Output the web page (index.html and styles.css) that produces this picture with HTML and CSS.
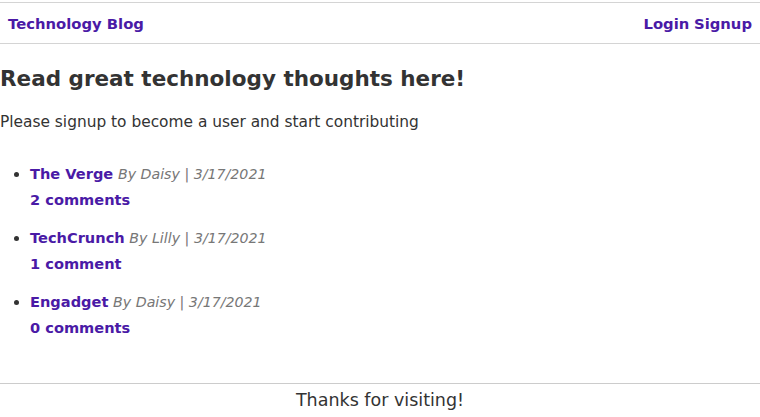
FILE: index.html
```html
<!DOCTYPE html>
<html>
<head>
<meta charset="utf-8">
<link rel="stylesheet" href="styles.css">
</head>
<body>
<header class="site-header">
  <a class="brand" href="#">Technology Blog</a>
  <nav class="nav"><a href="#">Login</a> <a href="#">Signup</a></nav>
</header>
<main class="content">
  <h1 class="title">Read great technology thoughts here!</h1>
  <p class="intro">Please signup to become a user and start contributing</p>
  <ul class="posts">
    <li class="post">
      <div><a class="post-title" href="#">The Verge</a> <span class="meta">By Daisy | 3/17/2021</span></div>
      <a class="comments" href="#">2 comments</a>
    </li>
    <li class="post">
      <div><a class="post-title" href="#">TechCrunch</a> <span class="meta">By Lilly | 3/17/2021</span></div>
      <a class="comments" href="#">1 comment</a>
    </li>
    <li class="post">
      <div><a class="post-title" href="#">Engadget</a> <span class="meta">By Daisy | 3/17/2021</span></div>
      <a class="comments" href="#">0 comments</a>
    </li>
  </ul>
</main>
<footer class="site-footer">Thanks for visiting!</footer>
</body>
</html>
```
FILE: styles.css
```css
body {
  margin: 0;
  font-family: "DejaVu Sans", sans-serif;
  color: #333;
  background: #fff;
}
a { color: #4a1aa6; text-decoration: none; font-weight: 600; }
.site-header {
  margin-top: 2px;
  border-top: 1px solid #d4d4d4;
  border-bottom: 1px solid #d4d4d4;
  height: 40px;
  display: flex;
  align-items: center;
  justify-content: space-between;
  padding: 0 8px;
  font-size: 14.8px;
}
.content {
  box-sizing: border-box;
  height: 339px;
  padding-top: 22px;
  display: flow-root;
}
.title {
  margin: 0;
  font-size: 21.5px;
  line-height: 25px;
  font-weight: bold;
  color: #333;
}
.intro { margin: 22px 0 0; font-size: 15.4px; line-height: 18px; }
.posts { margin: 30px 0 0; padding-left: 30px; }
.post { margin-bottom: 13px; font-size: 14.6px; line-height: 25px; }
.post-title { display: inline-block; line-height: 24px; }
.meta { font-style: italic; color: #777; font-size: 14.2px; font-weight: normal; }
.site-footer {
  border-top: 1px solid #ccc;
  text-align: center;
  font-size: 17.5px;
  line-height: 20px;
  padding-top: 6px;
}
```
